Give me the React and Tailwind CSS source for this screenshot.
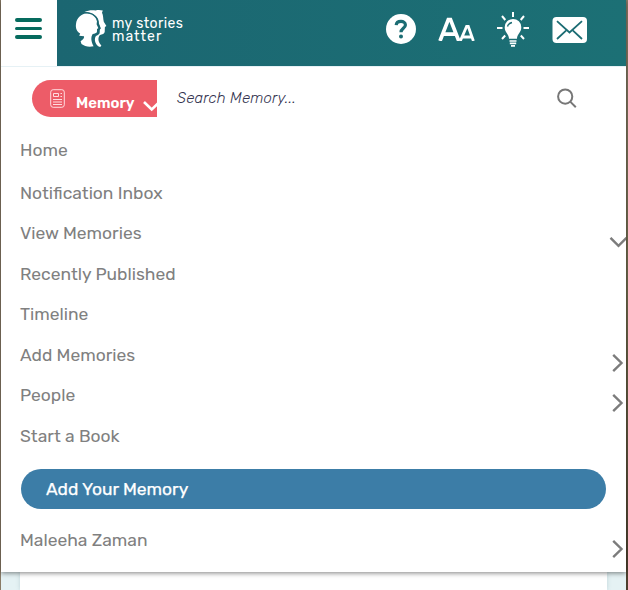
import React from "react";

const items = [
  { label: "Home", height: "h-[43px]" },
  { label: "Notification Inbox", height: "h-[40px]" },
  { label: "View Memories", height: "h-[41px]", icon: "down" },
  { label: "Recently Published", height: "h-[40px]" },
  { label: "Timeline", height: "h-[41px]" },
  { label: "Add Memories", height: "h-[40px]", icon: "right" },
  { label: "People", height: "h-[41px]", icon: "right" },
  { label: "Start a Book", height: "h-[40px]" },
];

function Chevron({ direction }) {
  return direction === "down" ? (
    <svg className="mt-[17px] h-3 w-[17px] shrink-0" viewBox="0 0 17 12" fill="none" stroke="#7c7c7c" strokeWidth="2.4">
      <path d="M1.5 .8 9.5 8.8 17.5 .8" />
    </svg>
  ) : (
    <svg className="mt-[11px] mr-[2px] h-5 w-3 shrink-0" viewBox="0 0 12 20" fill="none" stroke="#7c7c7c" strokeWidth="2.4">
      <path d="M1.2 1.8 9.5 10 1.2 18.2" />
    </svg>
  );
}

function Logo() {
  return (
    <svg className="ml-[18px] h-[39px] w-[33px] shrink-0" viewBox="0 0 33 39" fill="#fff">
      <path d="M12 4.3C17 4 21.3 7 22 12L21.6 15.2 23.4 19.2 22 20 22 22.6C21.8 24.6 19.5 24.6 17.7 25 15.6 28 16 32.5 18.6 37.2 14.5 38.2 9.4 37.5 6.5 35.1L5.6 32.2C8.7 30.5 9.4 28.6 9 27.3L4.2 26.8 5.2 24.4C1.7 22.8.4 18.7 1 14.9 1.6 8.8 6.5 4.6 12 4.3Z" />
      <path d="M9.5 3C13 1.2 17 .8 20.5 1.4 23 .8 25.5.8 27.8 1.6L27 3.8C28.4 6.2 28 9.8 28.8 12.8L31.4 17 29.9 17.9 29.7 23C29 25.6 25.8 25.4 24.7 26.3 22.4 29.4 23.4 33.5 26.4 36.6L25.2 38C21 36.6 18.6 31.4 20.6 27.4 22 26 24.8 25.8 24.7 22.9L24.8 20.8 25.8 19.3 23.9 14.5C24.3 8 18.5 3.2 9.5 3Z" />
      <path d="M9.5 3.7C17.8 3.7 23 8 22.9 14.6L24.7 19.4 23.4 20.6V23C23 25.6 20.2 25.4 19.2 26.1 17.1 29.2 17.7 33.4 20.5 38" fill="none" stroke="#1b6671" strokeWidth="1.3" />
    </svg>
  );
}

function HeaderIcons() {
  return (
    <div className="flex h-[66px] items-start text-white">
      <svg className="mt-[14px] h-[30px] w-[30px]" viewBox="0 0 30 30" fill="none">
        <circle cx="15" cy="15" r="15" fill="#fff" />
        <path d="M10.2 11.2C10.6 6.2 19.4 6.2 19.4 10.9 19.4 14.2 15 14.4 15 18.2" stroke="#1b6c73" strokeWidth="3.2" />
        <circle cx="15" cy="22.4" r="2" fill="#1b6c73" />
      </svg>
      <svg className="mt-[17px] ml-[22px] h-6 w-[37px]" viewBox="0 0 37 24" fill="none" stroke="#fff">
        <path d="M2 24 10.3 2.6h2.2L20.8 24M5.5 17.2h12" strokeWidth="3.7" />
        <path d="M22.3 24 28.6 9.5h1.7L35.4 24M25 20h8.5" strokeWidth="2.8" />
      </svg>
      <svg className="mt-[12px] ml-[22px] h-[35px] w-[32px]" viewBox="0 0 32 35" fill="none">
        <path d="M16 0v5M5 4l3.3 4M27 4l-3.3 4M0 16h5.5M26.5 16H32M5 27l3.2-3.5M27 27l-3.2-3.5" stroke="#fff" strokeWidth="2" />
        <path d="M12 26.8C12 22 7.7 20.8 7.7 15.2a8.3 8.3 0 0 1 16.6 0c0 5.6-4.3 6.8-4.3 11.6Z" fill="#fff" />
        <path d="M12.5 29h7M12.8 31.4h6.4M14 33.9h4" stroke="#fff" strokeWidth="1.6" />
        <path d="M10.5 14.5c.5-2 2-3.5 4.5-4" stroke="#1b6c73" strokeWidth="1.4" />
      </svg>
      <svg className="mt-[17px] ml-[23px] h-[26px] w-[35px]" viewBox="0 0 35 26" fill="none">
        <rect x=".5" width="34.5" height="26" rx="4" fill="#fff" />
        <path d="M5 4.2 17.5 15.5 30 4.2M5 22l9-8.4M30 22l-9-8.4" stroke="#1b6c73" strokeWidth="1.8" />
      </svg>
    </div>
  );
}

export default function App() {
  return (
    <div className="flex h-[590px] w-[628px] overflow-hidden bg-[#e5f2f4] font-['Rubik','Roboto',sans-serif]">
      <div className="w-px shrink-0 bg-[#897b66]" />
      <div className="flex w-[625px] shrink-0 flex-col">
        <div className="z-10 flex h-[572px] shrink-0 flex-col bg-white shadow-[0_1px_5px_rgba(0,0,0,0.5)]">
          <header className="flex h-[66px] shrink-0">
            <button className="flex w-14 flex-col gap-[5px] bg-white pt-[18px] pl-[14px]" aria-label="Menu">
              <span className="h-[4px] w-[27px] rounded-sm bg-[#066b5e]" />
              <span className="h-[3px] w-[27px] rounded-sm bg-[#066b5e]" />
              <span className="h-[4px] w-[27px] rounded-sm bg-[#066b5e]" />
            </button>
            <div className="flex flex-1 items-start justify-between bg-gradient-to-r from-[#1b6671] to-[#1c7075] pr-[39px]">
              <div className="flex pt-[9px] text-white">
                <Logo />
                <div className="mt-[8px] ml-[4px] text-[14px] leading-[13px] whitespace-nowrap">
                  <div className="tracking-[0.4px]">my stories</div>
                  <div className="tracking-[1px]">matter</div>
                </div>
              </div>
              <HeaderIcons />
            </div>
          </header>
          <div className="h-px shrink-0 bg-[#e6f1f5]" />
          <div className="flex h-[61px] shrink-0 items-start pt-[13px] pl-[31px]">
            <button className="flex h-[37px] w-[125px] items-start overflow-hidden rounded-l-full bg-[#ed5c68] pl-[18px] text-white">
              <svg className="mt-[9px] h-[19px] w-[15px] shrink-0" viewBox="0 0 15 19" fill="none" stroke="#ffdcdf" strokeWidth="1">
                <rect x=".7" y=".7" width="13.6" height="17.6" rx="2.5" />
                <path d="M3.5 4.5h5v3h-5ZM10.5 4.5h1.5M10.5 7.5h1.5M3 10.5h9M3 13h9M3 15.5h9" />
              </svg>
              <span className="mt-[13px] ml-[11px] w-[58px] shrink-0 text-[14.9px] leading-5 font-semibold">Memory</span>
              <svg className="mt-[20px] ml-[9px] h-3 w-[18px] shrink-0" viewBox="0 0 18 12" fill="none" stroke="#fff" strokeWidth="2.6">
                <path d="m1 2 7.7 7.5L16.4 2" />
              </svg>
            </button>
            <span className="mt-[8px] ml-5 flex-1 text-[15px] leading-5 font-light tracking-[0.18px] text-[#33334f] italic">Search Memory...</span>
            <svg className="mt-[8px] mr-[49px] h-5 w-5" viewBox="0 0 20 20" fill="none" stroke="#777" strokeWidth="2">
              <circle cx="8.2" cy="8.6" r="7.1" />
              <path d="m13.2 13.6 5.6 5.6" />
            </svg>
          </div>
          <nav className="flex flex-col text-[17.44px] text-[#808080]">
            {items.map((item) => (
              <a key={item.label} className={`flex shrink-0 items-start justify-between pl-[19px] ${item.height}`}>
                <span className="mt-[11px] leading-[22px]">{item.label}</span>
                {item.icon && (
                  <span className="mt-[9px] flex h-8">
                    <Chevron direction={item.icon} />
                  </span>
                )}
              </a>
            ))}
          </nav>
          <button className="mt-[15px] ml-5 flex h-10 w-[585px] shrink-0 items-center rounded-full bg-[#3c7da7] pl-[25px] text-[17.44px] font-normal text-white [-webkit-text-stroke:0.25px_white]">
            Add Your Memory
          </button>
          <a className="mt-5 flex items-start justify-between pl-[19px] text-[17.44px] text-[#808080]">
            <span className="leading-[22px]">Maleeha Zaman</span>
            <span className="-mt-px flex">
              <Chevron direction="right" />
            </span>
          </a>
        </div>
        <div className="mr-[19px] ml-[19px] flex-1 bg-white shadow-[0_0_4px_rgba(80,120,130,0.25)]" />
      </div>
      <div className="w-[2px] shrink-0 bg-gradient-to-b from-[#8b7c69] via-[#716b4d] to-[#4c3e2d]" />
    </div>
  );
}
